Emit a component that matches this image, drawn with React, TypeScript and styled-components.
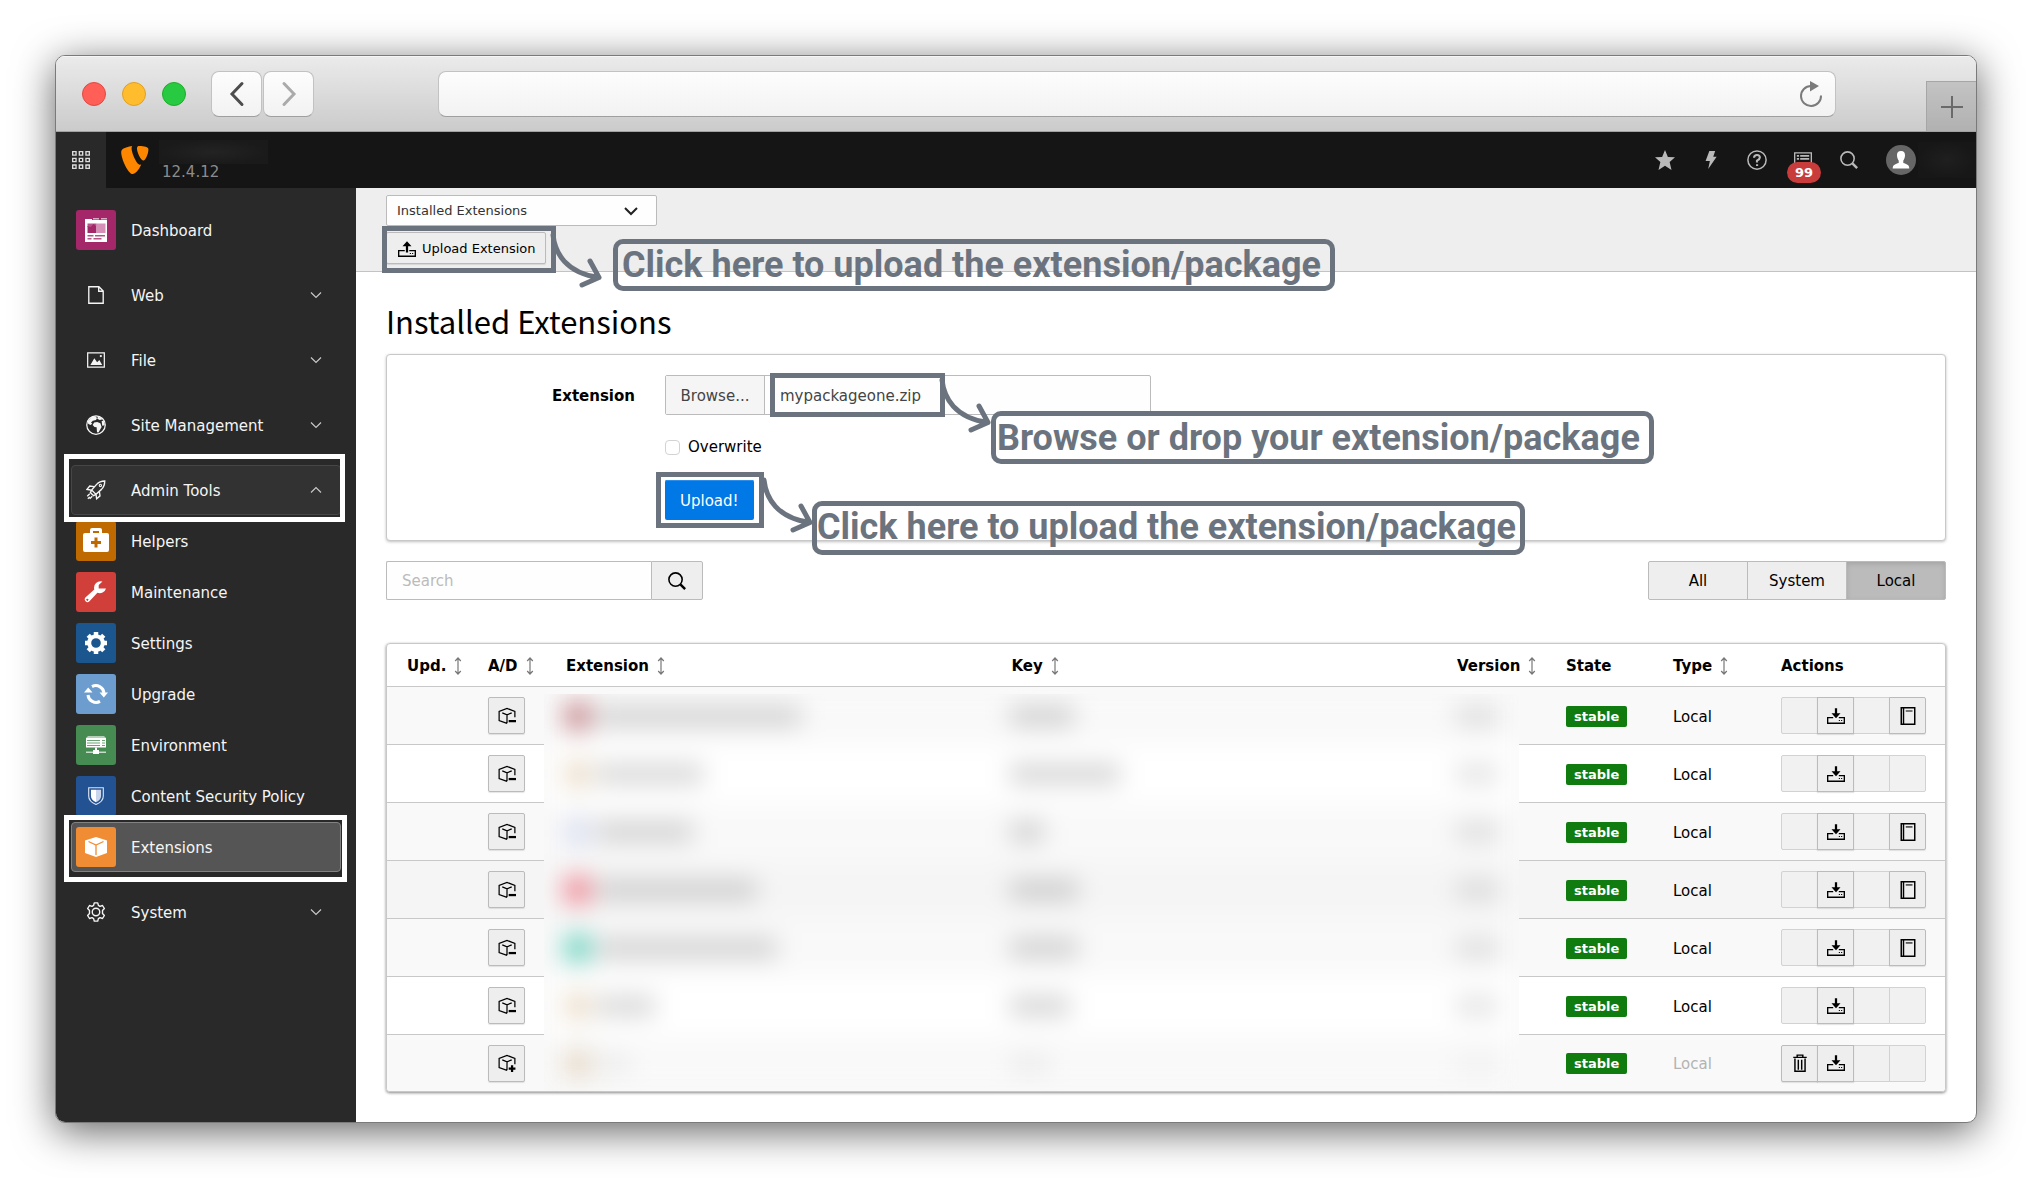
import React from "react";
import styled, { createGlobalStyle, css } from "styled-components";

const sans = `"DejaVu Sans", Verdana, sans-serif`;
const slate = "#6b747e";

const GlobalStyle = createGlobalStyle`
  *, *::before, *::after { box-sizing: border-box; }
  body { margin: 0; background: #fff; color: #000; font: 15px/24px ${sans}; }
  button, input, select { font: inherit; color: inherit; margin: 0; }
  svg { display: block; flex: none; }
`;

/* ---------- browser frame ---------- */

const Page = styled.div`
  display: flex;
  align-items: flex-start;
  min-height: 100vh;
  padding: 55px 55px 40px;
`;

const BrowserWindow = styled.div`
  flex: 1;
  min-width: 0;
  border: 1px solid #7a7a7a;
  border-radius: 10px;
  overflow: hidden;
  background: #fff;
  box-shadow: 0 8px 40px rgba(0, 0, 0, 0.62);
`;

const TitleBar = styled.div`
  display: flex;
  align-items: center;
  height: 76px;
  padding-left: 26px;
  background: linear-gradient(#ebebeb, #cbcbcb);
  border-bottom: 1px solid #a2a2a2;
  box-shadow: inset 0 1px 0 #f6f6f6;
`;

const Lights = styled.div`
  display: flex;
  gap: 16px;
`;

const Light = styled.button<{ $fill: string; $edge: string }>`
  width: 24px;
  height: 24px;
  padding: 0;
  border-radius: 50%;
  background: ${(p) => p.$fill};
  border: 1px solid ${(p) => p.$edge};
`;

const chromeControl = css`
  height: 46px;
  border: 1px solid #c2c2c2;
  border-bottom-color: #9f9f9f;
  border-radius: 8px;
  background: linear-gradient(#fdfdfd, #f2f2f2);
`;

const NavButtons = styled.div`
  display: flex;
  gap: 1px;
  margin-left: 25px;
`;

const NavButton = styled.button`
  ${chromeControl}
  display: grid;
  place-items: center;
  width: 51px;
  padding: 0;
`;

const AddressBar = styled.div`
  ${chromeControl}
  display: flex;
  align-items: center;
  flex: 1;
  margin: 0 90px 0 124px;
  padding-right: 11px;
`;

const AddressInput = styled.input`
  flex: 1;
  min-width: 0;
  height: 40px;
  padding: 0 12px;
  border: 0;
  outline: 0;
  background: transparent;
`;

const PlainButton = styled.button`
  display: grid;
  place-items: center;
  padding: 0;
  border: 0;
  background: transparent;
`;

const NewTab = styled.button`
  display: grid;
  place-items: center;
  align-self: flex-end;
  width: 50px;
  height: 50px;
  padding: 0;
  border: 1px solid #a6a6a6;
  border-width: 1px 0 0 1px;
  background: linear-gradient(#c3c3c3, #b1b1b1);
`;

/* ---------- top bar ---------- */

const TopBar = styled.header`
  display: flex;
  align-items: center;
  height: 56px;
  background: #151515;
  color: #b9b9b9;
`;

const AppsButton = styled(PlainButton)`
  width: 50px;
  height: 56px;
  background: #292929;
  color: #dcdcdc;
`;

const Brand = styled.div`
  display: flex;
  align-items: center;
  gap: 8px;
  padding-left: 13px;
`;

const SiteInfo = styled.div`
  display: flex;
  flex-direction: column;
`;

const SiteName = styled.div`
  width: 109px;
  height: 24px;
  background: radial-gradient(closest-side, #232323, #1a1a1a);
`;

const Version = styled.div`
  padding-left: 3px;
  line-height: 16px;
  color: #8c8c8c;
`;

const Tools = styled.nav`
  display: flex;
  align-items: center;
  margin-left: auto;
`;

const Tool = styled(PlainButton)`
  position: relative;
  width: 46px;
  height: 56px;
  color: inherit;
`;

const Count = styled.span`
  position: absolute;
  left: 7px;
  top: 30px;
  width: 34px;
  border-radius: 11px;
  background: #c83c3c;
  color: #fff;
  font-size: 13px;
  font-weight: bold;
  line-height: 21px;
  text-align: center;
`;

const UserButton = styled(Tool)`
  width: 58px;
`;

const UserName = styled.div`
  width: 58px;
  height: 36px;
  margin-left: -12px;
  background: radial-gradient(closest-side, #1f1f1f, #171717);
`;

/* ---------- layout ---------- */

const Body = styled.div`
  display: flex;
`;

const Sidebar = styled.nav`
  flex: none;
  width: 300px;
  padding: 17px 15px;
  background: #292929;
  color: #f5f5f5;
`;

const MenuItem = styled.a<{ $sub?: boolean; $state?: "open" | "current" }>`
  position: relative;
  display: flex;
  align-items: center;
  gap: 15px;
  height: 50px;
  margin-top: ${(p) => (p.$sub ? 1 : 15)}px;
  padding: 0 16px 0 4px;
  border: 1px solid transparent;
  border-radius: 4px;
  color: inherit;
  text-decoration: none;
  ${(p) => p.$state === "open" && "background: #323232; border-color: #464646;"}
  ${(p) => p.$state === "current" && "background: #555; border-color: #828282;"}
  &:first-child { margin-top: 0; }
`;

const IconTile = styled.span<{ $bg?: string }>`
  display: grid;
  place-items: center;
  width: 40px;
  height: 40px;
  border-radius: 3px;
  background: ${(p) => p.$bg || "transparent"};
`;

const MenuLabel = styled.span`
  flex: 1;
  padding-top: 2px;
  white-space: nowrap;
`;

const Main = styled.main`
  flex: 1;
  min-width: 0;
`;

const DocHeader = styled.div`
  display: flex;
  flex-direction: column;
  align-items: flex-start;
  gap: 6px;
  padding: 7px 30px;
  background: #eee;
  border-bottom: 1px solid #c3c3c3;
`;

const SelectWrap = styled.div`
  display: grid;
  align-items: center;
  width: 271px;
  & > * { grid-area: 1 / 1; }
  svg { justify-self: end; margin-right: 19px; pointer-events: none; }
`;

const ModuleSelect = styled.select`
  appearance: none;
  width: 100%;
  height: 31px;
  padding: 0 40px 0 10px;
  border: 1px solid #bbb;
  border-radius: 2px;
  background: #fefefe;
  color: #333;
  font-size: 13px;
`;

const Anchor = styled.div`
  position: relative;
`;

const ToolbarButton = styled.button`
  display: flex;
  align-items: center;
  gap: 6px;
  height: 32px;
  padding: 1px 9px 0 11px;
  border: 1px solid #bbb;
  border-radius: 2px;
  background: #eee;
  box-shadow: 0 1px 1px rgba(0, 0, 0, 0.1);
  font-size: 13px;
  white-space: nowrap;
`;

const Content = styled.div`
  padding: 29px 30px 30px;
`;

const Title = styled.h1`
  margin: 0 0 13px;
  font: 400 31px/40px "Noto Sans CJK SC", "Source Sans Pro", sans-serif;
`;

const panel = css`
  border: 1px solid #c8c8c8;
  border-radius: 4px;
  background: #fff;
  box-shadow: 0 1px 3px rgba(0, 0, 0, 0.25);
`;

const UploadForm = styled.form`
  ${panel}
  display: grid;
  grid-template-columns: 248px minmax(0, 486px);
  align-items: center;
  gap: 20px 30px;
  padding: 20px 0;
`;

const FieldLabel = styled.label`
  padding-top: 2px;
  font-weight: bold;
  text-align: right;
`;

const FieldColumn = styled.div`
  grid-column: 2;
  display: flex;
  align-items: center;
  height: 24px;
  margin-bottom: 1px;
`;

const ButtonRow = styled.div`
  grid-column: 2;
  display: flex;
`;

const FileField = styled.div`
  position: relative;
  display: flex;
  height: 40px;
  border: 1px solid #bbb;
  border-radius: 2px;
  background: #fefefe;
  color: #444;
`;

const BrowseButton = styled.button`
  width: 99px;
  padding: 2px 0 0;
  border: 0;
  border-right: 1px solid #bbb;
  background: #f5f5f5;
`;

const FileName = styled.input`
  flex: 1;
  min-width: 0;
  padding: 2px 15px 0;
  border: 0;
  outline: 0;
  background: transparent;
`;

const CheckBox = styled.input`
  appearance: none;
  width: 15px;
  height: 15px;
  margin-right: 8px;
  border: 1px solid #d3d3d3;
  border-radius: 4px;
  background: #fff;
`;

const PrimaryButton = styled.button`
  height: 40px;
  padding: 2px 15px 0;
  border: 0;
  border-radius: 2px;
  background: #0078e6;
  box-shadow: inset 0 1px 0 #2b8eea;
  color: #fff;
`;

const FilterBar = styled.div`
  display: flex;
  justify-content: space-between;
  margin: 20px 0 43px;
`;

const SearchForm = styled.form`
  display: flex;
  width: 317px;
`;

const SearchInput = styled.input`
  flex: 1;
  min-width: 0;
  height: 39px;
  padding: 1px 15px 0;
  border: 1px solid #bbb;
  border-right: 0;
  border-radius: 2px 0 0 2px;
  background: #fefefe;
  &::placeholder { color: #bbb; opacity: 1; }
`;

const SearchButton = styled(PlainButton)`
  width: 52px;
  height: 39px;
  border: 1px solid #bbb;
  border-radius: 0 2px 2px 0;
  background: #eee;
`;

const Segments = styled.div`
  display: flex;
`;

const Segment = styled.button<{ $active?: boolean }>`
  width: 100px;
  height: 39px;
  padding: 1px 0 0;
  border: 1px solid #bbb;
  background: ${(p) => (p.$active ? "#bbb" : "#eee")};
  box-shadow: ${(p) => (p.$active ? "inset 0 2px 5px rgba(0,0,0,.12)" : "none")};
  & + & { margin-left: -1px; }
  &:first-child { border-radius: 2px 0 0 2px; }
  &:last-child { border-radius: 0 2px 2px 0; }
`;

/* ---------- table ---------- */

const TableWrap = styled.div`
  ${panel}
  position: relative;
  overflow: hidden;
`;

const TableShadow = styled.div`
  border-radius: 4px;
  box-shadow: 0 1px 3px rgba(0, 0, 0, 0.25);
`;

const Table = styled.table`
  width: 100%;
  table-layout: fixed;
  border-collapse: separate;
  border-spacing: 0;
`;

const Col = styled.col<{ $w?: number }>`
  width: ${(p) => (p.$w ? `${p.$w}px` : "auto")};
`;

const Th = styled.th`
  height: 42px;
  padding: 2px 0 0 10px;
  text-align: left;
  white-space: nowrap;
  &:first-child { padding-left: 20px; }
`;

const HeadLabel = styled.span`
  display: flex;
  align-items: center;
  gap: 8px;
`;

const Tr = styled.tr<{ $bg: string; $muted?: boolean }>`
  background: ${(p) => p.$bg};
  color: ${(p) => (p.$muted ? "#b3b3b3" : "#000")};
`;

const Td = styled.td`
  height: 58px;
  padding: 0 0 0 10px;
  border-top: 1px solid #c8c8c8;
  tr:last-child > & { height: 57px; }
`;

const TextCell = styled(Td)`
  padding-top: 2px;
`;

const SquareButton = styled.button`
  display: grid;
  place-items: center;
  width: 37px;
  height: 37px;
  padding: 0;
  border: 1px solid #bbb;
  border-radius: 2px;
  background: #eee;
  box-shadow: 0 1px 1px rgba(0, 0, 0, 0.1);
  color: #000;
`;

const ActionGroup = styled.div`
  display: flex;
`;

const Action = styled(SquareButton)`
  border-radius: 0;
  & + & { margin-left: -1px; }
  &:disabled { background: #f1f1f1; border-color: #d2d2d2; box-shadow: none; }
  &:enabled { position: relative; }
  &:first-child { border-radius: 2px 0 0 2px; }
  &:last-child { border-radius: 0 2px 2px 0; }
`;

const Badge = styled.span`
  display: inline-block;
  padding: 0 8px;
  border-radius: 2px;
  background: #107c10;
  color: #fff;
  font-size: 13px;
  font-weight: bold;
  line-height: 21px;
  vertical-align: middle;
`;

/* Frosted cover that hides extension names, keys and versions. */
const Frost = styled.div`
  position: absolute;
  top: 50px;
  right: 426px;
  bottom: 0;
  left: 157px;
  overflow: hidden;
  background: #f8f8f8;
`;

const FrostRow = styled.div<{ $bg: string }>`
  display: grid;
  grid-template-columns: minmax(0, 1fr) minmax(0, 1fr) 63px;
  align-items: center;
  height: 58px;
  padding-left: 20px;
  background: ${(p) => p.$bg};
`;

const FrostInner = styled.div`
  margin: -7px -30px 0;
  padding: 0 30px;
  filter: blur(12px);
`;

const FrostCell = styled.div`
  display: flex;
  align-items: center;
  gap: 6px;
`;

const FrostIcon = styled.span<{ $tint: string }>`
  width: 27px;
  height: 28px;
  background: ${(p) => p.$tint};
`;

const FrostBar = styled.span<{ $level: number }>`
  height: 20px;
  background: rgba(0, 0, 0, ${(p) => p.$level});
`;

/* ---------- annotations ---------- */

const Frame = styled.div<{ $inset: string; $color?: string }>`
  position: absolute;
  z-index: 2;
  inset: ${(p) => p.$inset};
  border: 5px solid ${(p) => p.$color || slate};
  pointer-events: none;
`;

const Callout = styled.div<{ $left: number; $top: number; $pad: string }>`
  position: absolute;
  z-index: 3;
  left: ${(p) => p.$left}px;
  top: ${(p) => p.$top}px;
  padding: ${(p) => p.$pad};
  border: 5px solid ${slate};
  border-radius: 10px;
  color: ${slate};
  font: 700 36px/42px Roboto, sans-serif;
  white-space: nowrap;
`;

const ArrowBox = styled.div<{ $left: number; $top: number }>`
  position: absolute;
  z-index: 3;
  left: ${(p) => p.$left}px;
  top: ${(p) => p.$top}px;
  pointer-events: none;
`;

const Arrow = ({ left, top }: { left: number; top: number }) => (
  <ArrowBox $left={left} $top={top}>
    <svg width="54" height="56" viewBox="0 0 54 56" fill="none" stroke={slate} strokeWidth="5" strokeLinecap="round" strokeLinejoin="round">
      <path d="M3 3c2 18 13 38 46 42.500M40 29l9 16.500-17 7.500" />
    </svg>
  </ArrowBox>
);

/* ---------- icons ---------- */

type IconProps = { size?: number; children: React.ReactNode; stroke?: boolean };
const Icon = ({ size = 18, children, stroke }: IconProps) => (
  <svg
    width={size}
    height={size}
    viewBox="0 0 16 16"
    fill={stroke ? "none" : "currentColor"}
    stroke={stroke ? "currentColor" : "none"}
    aria-hidden="true"
  >
    {children}
  </svg>
);

const Chevron = ({ up }: { up?: boolean }) => (
  <svg width="16" height="16" viewBox="0 0 16 16" fill="none" stroke="#c8c8c8" strokeWidth="1.2">
    <path d={up ? "M3 10.500l5-5 5 5" : "M3 5.500l5 5 5-5"} />
  </svg>
);

const SortIcon = () => (
  <svg width="8" height="18" viewBox="0 0 8 18" fill="none" stroke="#777" strokeWidth="1.2">
    <path d="M4 1v16M1.200 4L4 1l2.800 3M1.200 14L4 17l2.800-3" />
  </svg>
);

const AppsIcon = () => (
  <Icon stroke>
    <path d="M.6.600h3v3h-3zM6.500.600h3v3h-3zM12.400.600h3v3h-3zM.6 6.500h3v3h-3zM6.500 6.500h3v3h-3zM12.400 6.500h3v3h-3zM.6 12.400h3v3h-3zM6.500 12.400h3v3h-3zM12.400 12.400h3v3h-3z" strokeWidth="1.200" />
  </Icon>
);

const Typo3Logo = () => (
  <svg width="32" height="32" viewBox="0 0 16 16" fill="#ff8700">
    <path d="M11.100 10.300c-.2 0-.3.100-.5.100-1.800 0-4.300-6.100-4.300-8.200 0-.8.200-1 .4-1.200-2 .2-4.500 1-5.300 2-.2.300-.3.600-.3 1.100C1.100 7.300 4.500 15 6.900 15c1.100 0 3-1.800 4.200-4.700M10.300 1c2.200 0 4.400.4 4.400 1.600 0 2.600-1.600 5.600-2.400 5.600-1.400 0-3.300-4-3.300-6C9 1.300 9.400 1 10.300 1" />
  </svg>
);

const SearchIcon = ({ size = 18 }: { size?: number }) => (
  <Icon size={size} stroke>
    <circle cx="6.700" cy="6.700" r="5.900" strokeWidth="1.400" />
    <path d="M11 11l4.200 4.200" strokeWidth="2.200" />
  </Icon>
);

const UploadIcon = () => (
  <Icon>
    <path d="M8 1l4 4.500H9V11H7V5.500H4z" />
    <path d="M6 9.500H.6v4.900h14.800V9.500H10" fill="none" stroke="currentColor" strokeWidth="1.200" />
    <path d="M10.500 11.500h1v1h-1zM12.500 11.500h1v1h-1z" />
  </Icon>
);

const DownloadIcon = () => (
  <Icon>
    <path d="M7 1h2v4.500h3L8 10 4 5.500h3z" />
    <path d="M5.500 9.500H.6v4.900h14.800V9.500h-4.900" fill="none" stroke="currentColor" strokeWidth="1.200" />
    <path d="M10.500 11.500h1v1h-1zM12.500 11.500h1v1h-1z" />
  </Icon>
);

const BookIcon = () => (
  <Icon stroke>
    <path d="M2 .600h12v14.800H2zM4 .600v14.800" strokeWidth="1.300" />
    <path d="M6 3.500h6" strokeWidth="1" />
  </Icon>
);

const TrashIcon = () => (
  <Icon stroke>
    <path d="M3.500 4v11.400h9V4M2 3h12M5.500 3V1h5v2M6.500 5v9M9.500 5v9" strokeWidth="1.300" />
  </Icon>
);

const BoxIcon = ({ plus }: { plus?: boolean }) => (
  <Icon>
    <path d="M8 14.500L1 12V4l7-2.800L15 4v5M8 14.500V7M3.800 5.200L8 7l4.200-1.800" fill="none" stroke="currentColor" strokeWidth="1.100" />
    {plus ? <path d="M11.500 10h2v2h2v2h-2v2h-2v-2h-2v-2h2z" /> : <path d="M9.500 11.500H16v2H9.500z" />}
  </Icon>
);

const DashboardIcon = () => (
  <svg width="24" height="24" viewBox="0 0 24 24" fill="#fff">
    <path d="M1 1h7v1h15v22H1z" />
    <path d="M9 0h6v1.500H9zM17 0h6v1.500h-6z" opacity=".6" />
    <path d="M3.500 8l3 1 3-3 3 2v7h-9z" fill="#a4276a" />
    <path d="M12.500 5.500h9V15h-9z" fill="#d68fb7" />
    <path d="M3.500 5.500h9V8l-3-1-3 2.500-3-.5z" fill="#a4276a" opacity=".8" />
    <path d="M3.500 17h6v1.500h-6zM3.500 20h4v1.500h-4zM11 17h10v1.500H11zM9.500 20h8v1.500h-8z" fill="#a4276a" opacity=".8" />
  </svg>
);

const HelpersIcon = () => (
  <svg width="28" height="28" viewBox="0 0 28 28" fill="#fff">
    <path d="M8 6V3q0-2 2-2h8q2 0 2 2v3h5q2 0 2 2v15q0 2-2 2H3q-2 0-2-2V8q0-2 2-2zm3 0h6V4h-6z" />
    <path d="M12.500 10.500h3v3.500H19v3h-3.500v3.500h-3V17H9v-3h3.500z" fill="#bf6a00" />
  </svg>
);

const WrenchIcon = () => (
  <svg width="24" height="24" viewBox="0 0 24 24" fill="#fff">
    <path d="M22 8.500a6.500 6.500 0 0 1-8.600 4.200L5.200 21.400a2.700 2.700 0 0 1-3.800-3.800l8.900-8.200A6.500 6.500 0 0 1 18.500 1.500L14.700 5v3.500h3.600zM3.300 18.700a1 1 0 1 0 .1 0z" />
  </svg>
);

const teeth = [0, 45, 90, 135, 180, 225, 270, 315];
const GearIcon = () => (
  <svg width="24" height="24" viewBox="0 0 24 24" fill="none" stroke="#fff">
    <circle cx="12" cy="12" r="6.800" strokeWidth="4" />
    {teeth.map((a) => (
      <path key={a} d="M12 1v3" strokeWidth="4.500" transform={`rotate(${a} 12 12)`} />
    ))}
  </svg>
);

const RefreshIcon = () => (
  <svg width="24" height="24" viewBox="0 0 24 24">
    <path d="M8 4.600A8.200 8.200 0 0 1 20 11M16 19.400A8.200 8.200 0 0 1 4 13" fill="none" stroke="#fff" strokeWidth="3" />
    <path d="M15.500 10.500H24L19.800 15.500zM0 10.500h8.500L4.200 5.500z" fill="#fff" />
  </svg>
);

const ServerIcon = () => (
  <svg width="20" height="20" viewBox="0 0 20 20" fill="#fff">
    <path d="M2 1h16l2 2H0z" opacity=".6" />
    <path d="M0 3h20v9.500H0z" />
    <path d="M1 5.500h13M1 8h13M1 10.500h13M16 5.500h3M16 8h3M16 10.500h3" stroke="#458b52" strokeWidth=".8" />
    <path d="M9 12.500h2V15h2v4H7v-4h2z" />
    <path d="M0 16.500h20v1.500H0z" opacity=".7" />
  </svg>
);

const ShieldIcon = () => (
  <Icon>
    <path d="M1.500.700h13V8q0 5-6.500 7.500Q1.500 13 1.500 8z" fill="none" stroke="#dbe4f2" strokeWidth="1" />
    <path d="M8 2.500v11Q3.500 11.500 3.500 8V2.500z" fill="#fff" />
    <path d="M8 2.500v11Q12.500 11.500 12.500 8V2.500z" fill="#c9d5ea" />
  </Icon>
);

const CubeIcon = () => (
  <svg width="22" height="22" viewBox="0 0 22 22" fill="#fff">
    <path d="M11 1l11 3.500V17L11 21 0 17V4.500z" />
    <path d="M3.500 5.500L11 9l7.500-3.500M11 9v10" fill="none" stroke="#f08d34" strokeWidth="1.300" />
  </svg>
);

const FileIcon = () => (
  <Icon stroke>
    <path d="M1.600.700h9L14.400 4.500v10.800H1.600zM10.400.700v4h4" strokeWidth="1.200" />
  </Icon>
);

const ImageIcon = () => (
  <Icon>
    <path d="M.6 1.600h14.800v12.800H.6z" fill="none" stroke="currentColor" strokeWidth="1.100" />
    <path d="M3 12.500l3.500-6L9 10l2-2 2.500 4.500z" />
    <circle cx="12.300" cy="4.500" r="1" />
  </Icon>
);

const GlobeIcon = () => (
  <Icon size={20}>
    <circle cx="8" cy="8" r="7.400" fill="none" stroke="currentColor" strokeWidth="1" />
    <path d="M7.500 1L4.500 1.500 1.500 5l.2 2 1.800 1L5 7l-1-1 1.500-1.500L8 4l.8-1.600zM9.500 1.300L9 3l2 1 2.500-.7A7 7 0 0 0 9.500 1.300zM6.500 6L5.300 8l1.500 1.500 1.700.3.300 4L10 14l2.500-4.500-1-3L9 5.500zM12.500 4.800l.5 3.700 2-.3-.8-3.700z" />
  </Icon>
);

const RocketIcon = () => (
  <Icon size={20} stroke>
    <path d="M15 .800q-4 0-6.500 2.700L4.500 8 8 11.500l4.400-4Q15 5 15 .800zM6.500 5.300L3 4.800.8 7.500l3 .5M10.700 9.200l.5 3.500-2.700 2.300-.5-3.500M4.500 8L3.500 10 6 12.500l2-1M3 11l-2 2M5 13l-2 2M1.500 15l1.500-1.500" strokeWidth="1.100" />
    <circle cx="11.500" cy="4.300" r=".9" strokeWidth=".9" />
  </Icon>
);

const CogIcon = () => (
  <Icon size={20} stroke>
    <path d="M6.600.700h2.800l.5 2 1.300.8 2-.7 1.500 2.400-1.500 1.600v2.400l1.500 1.600-1.500 2.400-2-.7-1.300.8-.5 2H6.600l-.5-2-1.300-.8-2 .7-1.500-2.400 1.500-1.600V6.800L1.300 5.200l1.500-2.400 2 .7 1.300-.8z" strokeWidth="1.100" strokeLinejoin="round" />
    <circle cx="8" cy="8" r="3" strokeWidth="1.100" />
  </Icon>
);

const StarIcon = () => (
  <Icon size={20}>
    <path d="M8 0l2.300 5.500 5.700.3-4.300 3.800L13.200 16 8 12.500 2.800 16l1.500-6.400L0 5.800l5.700-.3z" />
  </Icon>
);

const BoltIcon = () => (
  <Icon>
    <path d="M6.500 0h5.200L10 5h3L5.500 16 7 8.800H3.200z" />
  </Icon>
);

const HelpIcon = () => (
  <Icon size={20} stroke>
    <circle cx="8" cy="8" r="7.300" strokeWidth="1.200" />
    <path d="M5.600 6.200Q5.800 4 8 4t2.300 2Q10.300 7.200 8 8.500V10" strokeWidth="1.700" />
    <path d="M7.200 11.300h1.700v1.500H7.200z" fill="currentColor" stroke="none" />
  </Icon>
);

const ListIcon = () => (
  <Icon>
    <path d="M.6 1.600h14.800v12.800H.6z" fill="none" stroke="currentColor" strokeWidth="1.200" />
    <path d="M2.500 3.500h2V5h-2zM5.500 3.500h8V5h-8zM2.500 6.200h2v1.500h-2zM5.500 6.200h8v1.500h-8z" />
  </Icon>
);

const AvatarIcon = () => (
  <svg width="30" height="30" viewBox="0 0 30 30">
    <circle cx="15" cy="15" r="15" fill="#666" />
    <path d="M15 6c3 0 4.200 2 4 4.500-.1 2.500-1 4-1.700 5v2.500c3 1 6 1.500 6 5.500H6.700c0-4 3-4.500 6-5.500v-2.500c-.7-1-1.600-2.500-1.700-5C10.800 8 12 6 15 6z" fill="#fff" />
  </svg>
);

/* ---------- data ---------- */

type Module = {
  label: string;
  icon: React.ReactNode;
  bg?: string;
  sub?: boolean;
  chevron?: "up" | "down";
  state?: "open" | "current";
  frame?: string;
};

const modules: Module[] = [
  { label: "Dashboard", icon: <DashboardIcon />, bg: "#a4276a" },
  { label: "Web", icon: <FileIcon />, chevron: "down" },
  { label: "File", icon: <ImageIcon />, chevron: "down" },
  { label: "Site Management", icon: <GlobeIcon />, chevron: "down" },
  { label: "Admin Tools", icon: <RocketIcon />, chevron: "up", state: "open", frame: "-12px -5px -8px -8px" },
  { label: "Helpers", icon: <HelpersIcon />, bg: "#bf6a00", sub: true },
  { label: "Maintenance", icon: <WrenchIcon />, bg: "#d13f3a", sub: true },
  { label: "Settings", icon: <GearIcon />, bg: "#1c568f", sub: true },
  { label: "Upgrade", icon: <RefreshIcon />, bg: "#6d9dcf", sub: true },
  { label: "Environment", icon: <ServerIcon />, bg: "#458b52", sub: true },
  { label: "Content Security Policy", icon: <ShieldIcon />, bg: "#235293", sub: true },
  { label: "Extensions", icon: <CubeIcon />, bg: "#f08d34", sub: true, state: "current", frame: "-8px -7px -11px -8px" },
  { label: "System", icon: <CogIcon />, chevron: "down" },
];

const columns = [
  { label: "Upd.", w: 91, sort: true },
  { label: "A/D", w: 78, sort: true },
  { label: "Extension", sort: true },
  { label: "Key", sort: true },
  { label: "Version", w: 109, sort: true },
  { label: "State", w: 107 },
  { label: "Type", w: 108, sort: true },
  { label: "Actions", w: 174 },
];

type Row = { bg: string; docs?: boolean; inactive?: boolean; tint: string; name: number; keyW: number };
const rows: Row[] = [
  { bg: "#f9f9f9", docs: true, tint: "#c98f93", name: 204, keyW: 64 },
  { bg: "#ffffff", tint: "#ecdfcd", name: 106, keyW: 110 },
  { bg: "#f9f9f9", docs: true, tint: "#dde1f2", name: 96, keyW: 34 },
  { bg: "#f5f5f5", docs: true, tint: "#ee8f9a", name: 160, keyW: 68 },
  { bg: "#f9f9f9", docs: true, tint: "#74d5c3", name: 180, keyW: 68 },
  { bg: "#ffffff", tint: "#ecdfcd", name: 58, keyW: 60 },
  { bg: "#f9f9f9", inactive: true, tint: "#e6dac9", name: 34, keyW: 40 },
];

/* ---------- page ---------- */

export default function App() {
  return (
    <>
      <GlobalStyle />
      <Page>
        <BrowserWindow>
          <TitleBar>
            <Lights>
              <Light $fill="#ff5f57" $edge="#e14942" aria-label="Close" />
              <Light $fill="#ffbd2e" $edge="#dfa023" aria-label="Minimise" />
              <Light $fill="#28ca42" $edge="#1dad2b" aria-label="Zoom" />
            </Lights>
            <NavButtons>
              <NavButton aria-label="Back">
                <svg width="16" height="26" viewBox="0 0 16 26" fill="none" stroke="#4d4d4d" strokeWidth="3" strokeLinecap="round">
                  <path d="M13 2.500L3 13l10 10.500" />
                </svg>
              </NavButton>
              <NavButton aria-label="Forward">
                <svg width="16" height="26" viewBox="0 0 16 26" fill="none" stroke="#aaa" strokeWidth="3" strokeLinecap="round">
                  <path d="M3 2.500L13 13 3 23.500" />
                </svg>
              </NavButton>
            </NavButtons>
            <AddressBar>
              <AddressInput aria-label="Address" />
              <PlainButton aria-label="Reload">
                <svg width="26" height="28" viewBox="0 0 26 28" fill="none">
                  <path d="M23 15.500A10 10 0 1 1 13 6" stroke="#7b7b7b" strokeWidth="2" />
                  <path d="M12 1l9 5-9 5.500z" fill="#7b7b7b" />
                </svg>
              </PlainButton>
            </AddressBar>
            <NewTab aria-label="New tab">
              <svg width="22" height="22" viewBox="0 0 22 22" stroke="#6a6a6a" strokeWidth="2">
                <path d="M11 0v22M0 11h22" />
              </svg>
            </NewTab>
          </TitleBar>

          <TopBar>
            <AppsButton aria-label="Toggle menu">
              <AppsIcon />
            </AppsButton>
            <Brand>
              <Typo3Logo />
              <SiteInfo>
                <SiteName />
                <Version>12.4.12</Version>
              </SiteInfo>
            </Brand>
            <Tools>
              <Tool aria-label="Bookmarks"><StarIcon /></Tool>
              <Tool aria-label="Clear cache"><BoltIcon /></Tool>
              <Tool aria-label="Help"><HelpIcon /></Tool>
              <Tool aria-label="System information">
                <ListIcon />
                <Count>99</Count>
              </Tool>
              <Tool aria-label="Search"><SearchIcon /></Tool>
              <UserButton aria-label="User"><AvatarIcon /></UserButton>
              <UserName />
            </Tools>
          </TopBar>

          <Body>
            <Sidebar>
              {modules.map((m) => (
                <MenuItem key={m.label} href="#" $sub={m.sub} $state={m.state}>
                  <IconTile $bg={m.bg}>{m.icon}</IconTile>
                  <MenuLabel>{m.label}</MenuLabel>
                  {m.chevron && <Chevron up={m.chevron === "up"} />}
                  {m.frame && <Frame $inset={m.frame} $color="#fff" />}
                </MenuItem>
              ))}
            </Sidebar>

            <Main>
              <DocHeader>
                <SelectWrap>
                  <ModuleSelect aria-label="Module action">
                    <option>Installed Extensions</option>
                  </ModuleSelect>
                  <svg width="14" height="10" viewBox="0 0 14 10" fill="none" stroke="#222" strokeWidth="2">
                    <path d="M1 2l6 6 6-6" />
                  </svg>
                </SelectWrap>
                <Anchor>
                  <ToolbarButton>
                    <UploadIcon />
                    Upload Extension
                  </ToolbarButton>
                  <Frame $inset="-6px -10px -9px -4px" />
                  <Arrow left={164} top={0} />
                  <Callout $left={227} $top={7} $pad="0 9px 0 4px">Click here to upload the extension/package</Callout>
                </Anchor>
              </DocHeader>

              <Content>
                <Title>Installed Extensions</Title>

                <UploadForm onSubmit={(e) => e.preventDefault()}>
                  <FieldLabel htmlFor="package">Extension</FieldLabel>
                  <FileField>
                    <BrowseButton type="button">Browse...</BrowseButton>
                    <FileName id="package" defaultValue="mypackageone.zip" readOnly />
                    <Frame $inset="-3px 205px -3px 104px" />
                    <Arrow left={273} top={1} />
                    <Callout $left={325} $top={35} $pad="1px 9px 0 1px">Browse or drop your extension/package</Callout>
                  </FileField>
                  <FieldColumn>
                    <CheckBox type="checkbox" id="overwrite" />
                    <label htmlFor="overwrite">Overwrite</label>
                  </FieldColumn>
                  <ButtonRow>
                    <Anchor>
                      <PrimaryButton type="submit">Upload!</PrimaryButton>
                      <Frame $inset="-8px -10px -8px -9px" />
                      <Arrow left={96} top={-3} />
                      <Callout $left={147} $top={21} $pad="0 4px 2px 0">Click here to upload the extension/package</Callout>
                    </Anchor>
                  </ButtonRow>
                </UploadForm>

                <FilterBar>
                  <SearchForm onSubmit={(e) => e.preventDefault()}>
                    <SearchInput placeholder="Search" aria-label="Search extensions" />
                    <SearchButton aria-label="Search"><SearchIcon /></SearchButton>
                  </SearchForm>
                  <Segments>
                    <Segment>All</Segment>
                    <Segment>System</Segment>
                    <Segment $active>Local</Segment>
                  </Segments>
                </FilterBar>

                <TableShadow>
                  <TableWrap>
                    <Table>
                      <colgroup>
                        {columns.map((c) => (
                          <Col key={c.label} $w={c.w} />
                        ))}
                      </colgroup>
                      <thead>
                        <tr>
                          {columns.map((c) => (
                            <Th key={c.label} scope="col">
                              <HeadLabel>
                                {c.label}
                                {c.sort && <SortIcon />}
                              </HeadLabel>
                            </Th>
                          ))}
                        </tr>
                      </thead>
                      <tbody>
                        {rows.map((r, i) => (
                          <Tr key={i} $bg={r.bg} $muted={r.inactive}>
                            <Td />
                            <Td>
                              <SquareButton aria-label={r.inactive ? "Activate" : "Deactivate"}>
                                <BoxIcon plus={r.inactive} />
                              </SquareButton>
                            </Td>
                            <Td />
                            <Td />
                            <Td />
                            <Td><Badge>stable</Badge></Td>
                            <TextCell>Local</TextCell>
                            <Td>
                              <ActionGroup>
                                <Action disabled={!r.inactive} aria-label="Remove">{r.inactive && <TrashIcon />}</Action>
                                <Action aria-label="Download"><DownloadIcon /></Action>
                                <Action disabled aria-label="Import data" />
                                <Action disabled={!r.docs} aria-label="Documentation">{r.docs && <BookIcon />}</Action>
                              </ActionGroup>
                            </Td>
                          </Tr>
                        ))}
                      </tbody>
                    </Table>
                    <Frost aria-hidden="true">
                      <FrostInner>
                        {rows.map((r, i) => (
                          <FrostRow key={i} $bg={r.bg}>
                            <FrostCell>
                              <FrostIcon $tint={r.tint} />
                              <FrostBar $level={r.inactive ? 0.05 : 0.16} style={{ width: r.name }} />
                            </FrostCell>
                            <FrostCell>
                              <FrostBar $level={r.inactive ? 0.05 : 0.17} style={{ width: r.keyW }} />
                            </FrostCell>
                            <FrostCell>
                              <FrostBar $level={r.inactive ? 0.03 : 0.11} style={{ width: 42 }} />
                            </FrostCell>
                          </FrostRow>
                        ))}
                      </FrostInner>
                    </Frost>
                  </TableWrap>
                </TableShadow>
              </Content>
            </Main>
          </Body>
        </BrowserWindow>
      </Page>
    </>
  );
}
